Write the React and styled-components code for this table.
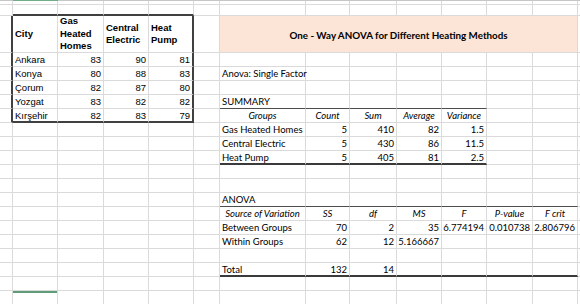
import React from 'react';
import styled, { createGlobalStyle } from 'styled-components';

// column widths (A..N) and row heights, as read off the sheet
const COLS = [13, 45, 46, 45, 45, 26, 86, 44, 47, 45, 45, 46, 45, 2];
const ROWS = [4, 11, 37, ...Array(18).fill(14)];
const GRID = '#dadada';
const THIN = '1px solid #4d4d4d';
const THICK = '2px solid #3a3a3a';
const BOX = '2px solid #404040';

const GlobalStyle = createGlobalStyle`
  html, body {
    margin: 0;
    padding: 0;
    background: #fff;
    overflow: hidden;
  }
`;

const Sheet = styled.div`
  width: 580px;
  height: 304px;
  overflow: hidden;
  display: flex;
  flex-direction: column;
  background: #fff;
`;

const ColumnEdge = styled.div`
  display: grid;
  grid-template-columns: ${COLS.map(w => w + 'px').join(' ')};
  height: 1px;
  flex: none;
`;

const EdgeSegment = styled.div`
  background: ${p => (p.$active ? '#72ad8a' : '#c6c6c6')};
`;

const Grid = styled.div`
  display: grid;
  grid-template-columns: ${COLS.map(w => w + 'px').join(' ')};
  grid-template-rows: ${ROWS.map(h => h + 'px').join(' ')};
  flex: none;
`;

const alignMap = { left: 'flex-start', right: 'flex-end', center: 'center' };

const Cell = styled.div`
  grid-column: span ${p => p.$span || 1};
  box-sizing: border-box;
  min-width: 0;
  border-right: ${p => p.$right || `1px solid ${GRID}`};
  border-bottom: ${p => p.$bottom || `1px solid ${GRID}`};
  background: ${p => p.$bg || 'transparent'};
  box-shadow: ${p => (p.$selected ? 'inset 0 2px 0 #5e9d77' : 'none')};
  display: flex;
  align-items: center;
  justify-content: ${p => alignMap[p.$align || 'left']};
  padding: ${p => (p.$wrap ? '0 2px' : '1px 2px 0')};
  overflow: visible;
  white-space: ${p => (p.$wrap ? 'normal' : 'nowrap')};
  font-family: ${p =>
    p.$arial ? '"Liberation Sans", Arial, sans-serif' : 'Lato, "Open Sans", sans-serif'};
  font-size: ${p => (p.$title ? '9.8px' : '9.5px')};
  line-height: ${p => (p.$wrap ? '12.5px' : '12px')};
  font-weight: ${p => (p.$bold ? 700 : 400)};
  font-style: ${p => (p.$italic ? 'italic' : 'normal')};
  color: #000;
`;

const r = n => n + 3;
const cells = {};
const put = (row, col, props) => {
  cells[row] = cells[row] || {};
  cells[row][col] = { ...(cells[row][col] || {}), ...props };
};

// left data table
const cities = [
  ['Ankara', 83, 90, 81],
  ['Konya', 80, 88, 83],
  ['Çorum', 82, 87, 80],
  ['Yozgat', 83, 82, 82],
  ['Kırşehir', 82, 83, 79],
];
[1, 2, 3, 4].forEach(c => put(1, c, { $bottom: BOX }));
put(2, 0, { $right: BOX });
put(2, 1, { text: 'City', $arial: true, $bold: true, $wrap: true });
put(2, 2, { text: 'Gas Heated Homes', $arial: true, $bold: true, $wrap: true });
put(2, 3, { text: 'Central Electric', $arial: true, $bold: true, $wrap: true });
put(2, 4, { text: 'Heat Pump', $arial: true, $bold: true, $wrap: true, $right: BOX });
cities.forEach((row, i) => {
  put(r(i), 0, { $right: BOX });
  put(r(i), 1, { text: row[0], $arial: true });
  put(r(i), 2, { text: row[1], $arial: true, $align: 'right' });
  put(r(i), 3, { text: row[2], $arial: true, $align: 'right' });
  put(r(i), 4, { text: row[3], $arial: true, $align: 'right', $right: BOX });
  if (i === 4) [1, 2, 3, 4].forEach(c => put(r(i), c, { $bottom: BOX }));
});

// title band
put(2, 6, {
  text: 'One - Way ANOVA for Different Heating Methods',
  $span: 7,
  $bold: true,
  $title: true,
  $align: 'center',
  $bg: '#fce4d6',
});

put(r(1), 6, { text: 'Anova: Single Factor' });

// summary block
put(r(3), 6, { text: 'SUMMARY' });
[6, 7, 8, 9, 10].forEach(c => put(r(3), c, { $bottom: THIN }));
['Groups', 'Count', 'Sum', 'Average', 'Variance'].forEach((t, i) =>
  put(r(4), 6 + i, { text: t, $italic: true, $align: 'center' })
);
const summary = [
  ['Gas Heated Homes', 5, 410, 82, 1.5],
  ['Central Electric', 5, 430, 86, 11.5],
  ['Heat Pump', 5, 405, 81, 2.5],
];
summary.forEach((row, i) => {
  row.forEach((v, j) => put(r(5 + i), 6 + j, { text: v, $align: j ? 'right' : 'left' }));
});
[6, 7, 8, 9, 10].forEach(c => put(r(7), c, { $bottom: THICK }));

// anova block
const span = [6, 7, 8, 9, 10, 11, 12];
put(r(10), 6, { text: 'ANOVA' });
span.forEach(c => put(r(10), c, { $bottom: THIN }));
['Source of Variation', 'SS', 'df', 'MS', 'F', 'P-value', 'F crit'].forEach((t, i) =>
  put(r(11), 6 + i, { text: t, $italic: true, $align: 'center' })
);
const anova = [
  [12, ['Between Groups', 70, 2, 35, '6.774194', '0.010738', '2.806796']],
  [13, ['Within Groups', 62, 12, '5.166667']],
  [15, ['Total', 132, 14]],
];
anova.forEach(([row, vals]) =>
  vals.forEach((v, j) => put(r(row), 6 + j, { text: v, $align: j ? 'right' : 'left' }))
);
span.forEach(c => put(r(15), c, { $bottom: THICK }));

put(r(17), 1, { $selected: true });

const App = () => {
  const rendered = [];
  ROWS.forEach((_, ri) => {
    let ci = 0;
    while (ci < COLS.length) {
      const cell = (cells[ri] && cells[ri][ci]) || {};
      const { text, ...props } = cell;
      rendered.push(
        <Cell key={`${ri}-${ci}`} {...props}>
          {text}
        </Cell>
      );
      ci += cell.$span || 1;
    }
  });

  return (
    <>
      <GlobalStyle />
      <Sheet>
        <ColumnEdge>
          {COLS.map((_, i) => (
            <EdgeSegment key={i} $active={i === 1} />
          ))}
        </ColumnEdge>
        <Grid>{rendered}</Grid>
      </Sheet>
    </>
  );
};

export default App;
